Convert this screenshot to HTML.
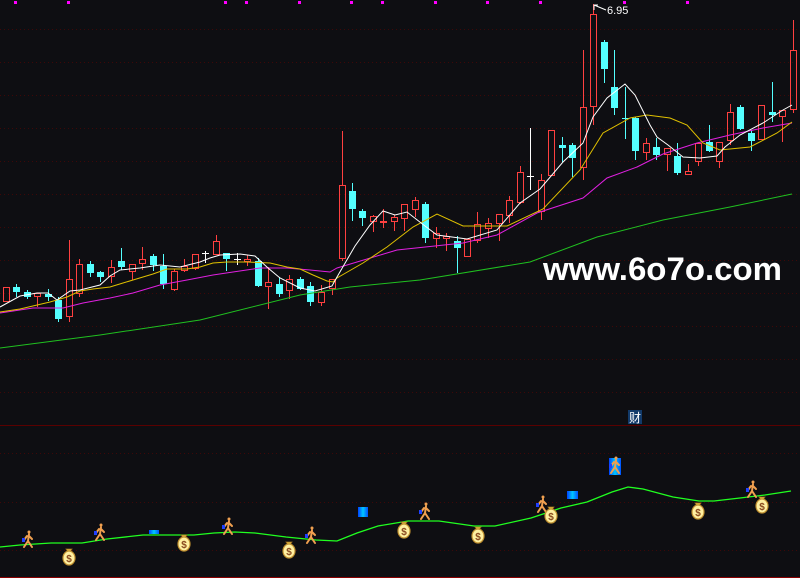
<!DOCTYPE html>
<html><head><meta charset="utf-8"><style>
html,body{margin:0;padding:0;background:#0e0e12;}
svg{display:block}
</style></head><body>
<svg id="s" width="800" height="578" xmlns="http://www.w3.org/2000/svg" style="background:#0e0e12">
<defs>
<linearGradient id="bl" x1="0" x2="1"><stop offset="0" stop-color="#0040ff"/><stop offset="0.5" stop-color="#00c8ff"/><stop offset="1" stop-color="#0050ff"/></linearGradient>
<g id="bag"><path d="M-3,-8 L3,-8 L1,-5 L-1,-5Z" fill="#e8c040" stroke="#a07020" stroke-width="0.8"/><ellipse cx="0" cy="1" rx="6" ry="7" fill="#fff0a0" stroke="#c09030" stroke-width="1.2"/><text x="0" y="5" font-family="Liberation Sans,sans-serif" font-size="10" font-weight="bold" fill="#8a4a20" text-anchor="middle">$</text></g>
<g id="run" fill="none" stroke="#f0a050" stroke-width="2" stroke-linecap="round"><circle cx="1" cy="-8" r="1.5" fill="#f0a050" stroke="none"/><path d="M1,-6 L0,1 M0,1 L-4,7 M0,1 L4,7 M-1,-4 L-4,0 M1,-4 L4,-1"/><rect x="-6" y="-2" width="3" height="4" fill="#2040ff" stroke="none"/></g>
</defs>
<g id="grid" stroke="#3e0808" stroke-dasharray="1 3" stroke-width="1"></g>
<line x1="0" y1="425.5" x2="800" y2="425.5" stroke="#5a0000"/>
<line x1="0" y1="577.5" x2="800" y2="577.5" stroke="#8a0000"/>
<g id="dots" fill="#ff00ff"></g>
<g id="cand"></g>
<g fill="none" stroke-width="1">
<polyline stroke="#20c020" points="0,348 100,335 200,320 300,295 350,287 420,280 530,262 597,237 663,220 730,207 792,194"/>
<polyline stroke="#e020e0" points="0,313 33,308 63,308 83,303 110,298 133,293 160,285 187,280 213,275 233,272 260,268 287,268 310,270 330,272 337,268 397,250 463,243 497,235 537,213 583,198 607,178 637,167 663,154 697,143 730,135 763,128 792,123"/>
<polyline stroke="#e0c000" points="0,312 20,309 50,302 67,297 80,291 93,289 110,287 123,283 133,280 153,274 167,269 187,269 200,267 213,263 227,262 247,262 270,263 287,267 300,269 313,275 327,281 333,282 337,278 363,263 387,247 413,227 437,214 463,226 507,226 543,209 580,170 603,133 630,118 647,115 670,118 687,125 703,143 720,150 750,147 777,133 792,122"/>
<polyline stroke="#ffffff" points="0,307 20,296 37,293 48,293 57,300 70,291 80,290 100,285 110,276 120,270 140,268 160,265 180,267 200,262 210,258 220,255 240,254 255,256 268,268 280,278 300,288 315,291 332,286 337,277 355,246 370,225 383,211 395,215 407,212 425,226 437,235 467,239 497,230 520,203 540,189 563,162 583,143 593,117 607,98 625,84 635,95 650,125 657,137 668,145 683,157 700,158 717,156 725,147 740,135 763,123 783,110 792,105"/>
</g>
<path d="M594,10 L594,5 L598,5 M594,5 L606,10" stroke="#fff" fill="none" stroke-width="1"/>
<text x="607" y="14" font-family="Liberation Sans,sans-serif" font-size="11" fill="#fff">6.95</text>
<text x="543" y="280" font-family="Liberation Sans,sans-serif" font-size="32" font-weight="bold" fill="#fff" textLength="239" lengthAdjust="spacingAndGlyphs">www.6o7o.com</text>
<polyline fill="none" stroke="#20ff20" stroke-width="1.3" points="0,547 20,545 51,543 82,543 107,539 143,535 168,535 194,535 214,533 235,532 255,533 286,537 316,540 337,541 357,533 378,526 408,521 439,521 474,526 495,526 531,518 561,508 587,502 612,492 628,487 643,489 673,497 699,501 714,501 740,498 765,495 791,491"/>
<rect x="628" y="410" width="14" height="14" fill="#123a6a"/>
<text x="635" y="422" font-family="Noto Sans CJK SC,sans-serif" font-size="12" fill="#fff" text-anchor="middle">财</text>
<rect x="149" y="530" width="10" height="4" fill="url(#bl)"/>
<rect x="358" y="507" width="10" height="10" fill="url(#bl)"/>
<rect x="567" y="491" width="11" height="8" fill="url(#bl)"/>
<rect x="609" y="458" width="12" height="17" fill="url(#bl)"/>
<g id="icons"></g>
</svg>
<script>
var NS="http://www.w3.org/2000/svg";
function el(t,a,p){var e=document.createElementNS(NS,t);for(var k in a)e.setAttribute(k,a[k]);document.getElementById(p).appendChild(e);return e;}
for(var y=29;y<400;y+=33)el('line',{x1:0,y1:y+.5,x2:800,y2:y+.5},'grid');
[453,502,550].forEach(function(y){el('line',{x1:0,y1:y+.5,x2:800,y2:y+.5},'grid');});
[15,68,225,246,299,351,382,435,487,540,624,687].forEach(function(x){el('rect',{x:x-1,y:1,width:3,height:3},'dots');});
var C=[[6,287,302,287,302,'r'],[16,287,292,284,297,'c'],[27,292,297,290,299,'c'],[37,293,297,293,307,'r'],[48,294,297,289,301,'c'],[58,300,319,297,322,'c'],[69,279,317,240,322,'r'],[79,264,294,259,297,'r'],[90,264,273,261,277,'c'],[100,272,277,271,282,'c'],[111,267,277,260,283,'r'],[121,261,267,248,270,'c'],[132,264,272,264,280,'r'],[142,259,264,247,270,'r'],[153,256,265,254,271,'c'],[163,266,284,254,289,'c'],[174,271,290,269,291,'r'],[184,266,271,259,272,'r'],[195,254,269,254,270,'r'],[205,253,253,251,263,'w'],[216,241,255,235,255,'r'],[226,253,259,253,271,'c'],[237,259,259,253,265,'w'],[247,259,262,255,266,'r'],[258,261,286,258,287,'c'],[268,282,287,267,309,'r'],[279,284,294,277,297,'c'],[289,279,291,275,299,'r'],[300,279,289,277,290,'c'],[310,286,302,282,306,'c'],[321,292,303,285,306,'r'],[332,279,289,279,295,'r'],[342,185,259,131,261,'r'],[352,191,209,183,221,'c'],[362,211,218,209,226,'c'],[373,216,222,215,232,'r'],[383,221,223,209,228,'r'],[394,217,222,215,231,'r'],[404,204,219,204,231,'r'],[415,200,210,197,217,'r'],[425,204,238,202,243,'c'],[436,233,239,227,248,'r'],[446,236,239,233,251,'r'],[457,241,248,236,273,'c'],[467,239,257,239,257,'r'],[477,224,241,212,243,'r'],[488,223,229,218,238,'r'],[499,214,224,214,241,'r'],[509,200,216,196,223,'r'],[520,172,203,166,204,'r'],[530,176,176,128,190,'w'],[541,180,212,174,220,'r'],[551,130,176,130,176,'r'],[562,145,148,137,162,'c'],[572,145,158,143,177,'c'],[583,107,168,50,180,'r'],[593,14,107,4,125,'r'],[604,42,69,40,83,'c'],[614,87,108,50,115,'c'],[625,118,119,87,139,'c'],[635,118,151,117,160,'c'],[646,143,153,138,160,'r'],[656,147,155,138,160,'c'],[667,148,155,148,171,'r'],[677,156,173,143,175,'c'],[688,171,175,164,175,'r'],[698,143,162,143,166,'r'],[709,142,151,125,152,'c'],[719,142,162,142,168,'r'],[730,112,141,104,145,'r'],[740,107,129,105,130,'c'],[751,133,141,130,151,'c'],[761,105,140,105,140,'r'],[772,112,115,82,122,'c'],[782,110,117,110,142,'r'],[793,50,110,20,113,'r']];
C.forEach(function(c){var x=c[0]+.5,t=c[5];
 if(t=='c'){el('line',{x1:x,y1:c[3],x2:x,y2:c[4],stroke:'#54ffff'},'cand');el('rect',{x:c[0]-3,y:c[1],width:7,height:Math.max(1,c[2]-c[1]),fill:'#54ffff'},'cand');}
 else if(t=='w'){el('line',{x1:x,y1:c[3],x2:x,y2:c[4],stroke:'#fff'},'cand');el('line',{x1:c[0]-3,y1:c[1]+.5,x2:c[0]+4,y2:c[1]+.5,stroke:'#fff'},'cand');}
 else{var s='#ff4040';if(c[3]<c[1])el('line',{x1:x,y1:c[3],x2:x,y2:c[1],stroke:s},'cand');if(c[4]>c[2])el('line',{x1:x,y1:c[2],x2:x,y2:c[4],stroke:s},'cand');el('rect',{x:c[0]-2.5,y:c[1]+.5,width:6,height:Math.max(1,c[2]-c[1]-1),fill:'none',stroke:s},'cand');}
});
[[28,540],[100,533],[228,527],[311,536],[425,512],[542,505],[615,466],[752,490]].forEach(function(p){el('use',{href:'#run',x:p[0],y:p[1]},'icons');});
[[69,557],[184,543],[289,550],[404,530],[478,535],[551,515],[698,511],[762,505]].forEach(function(p){el('use',{href:'#bag',x:p[0],y:p[1]},'icons');});
</script>
</body></html>
